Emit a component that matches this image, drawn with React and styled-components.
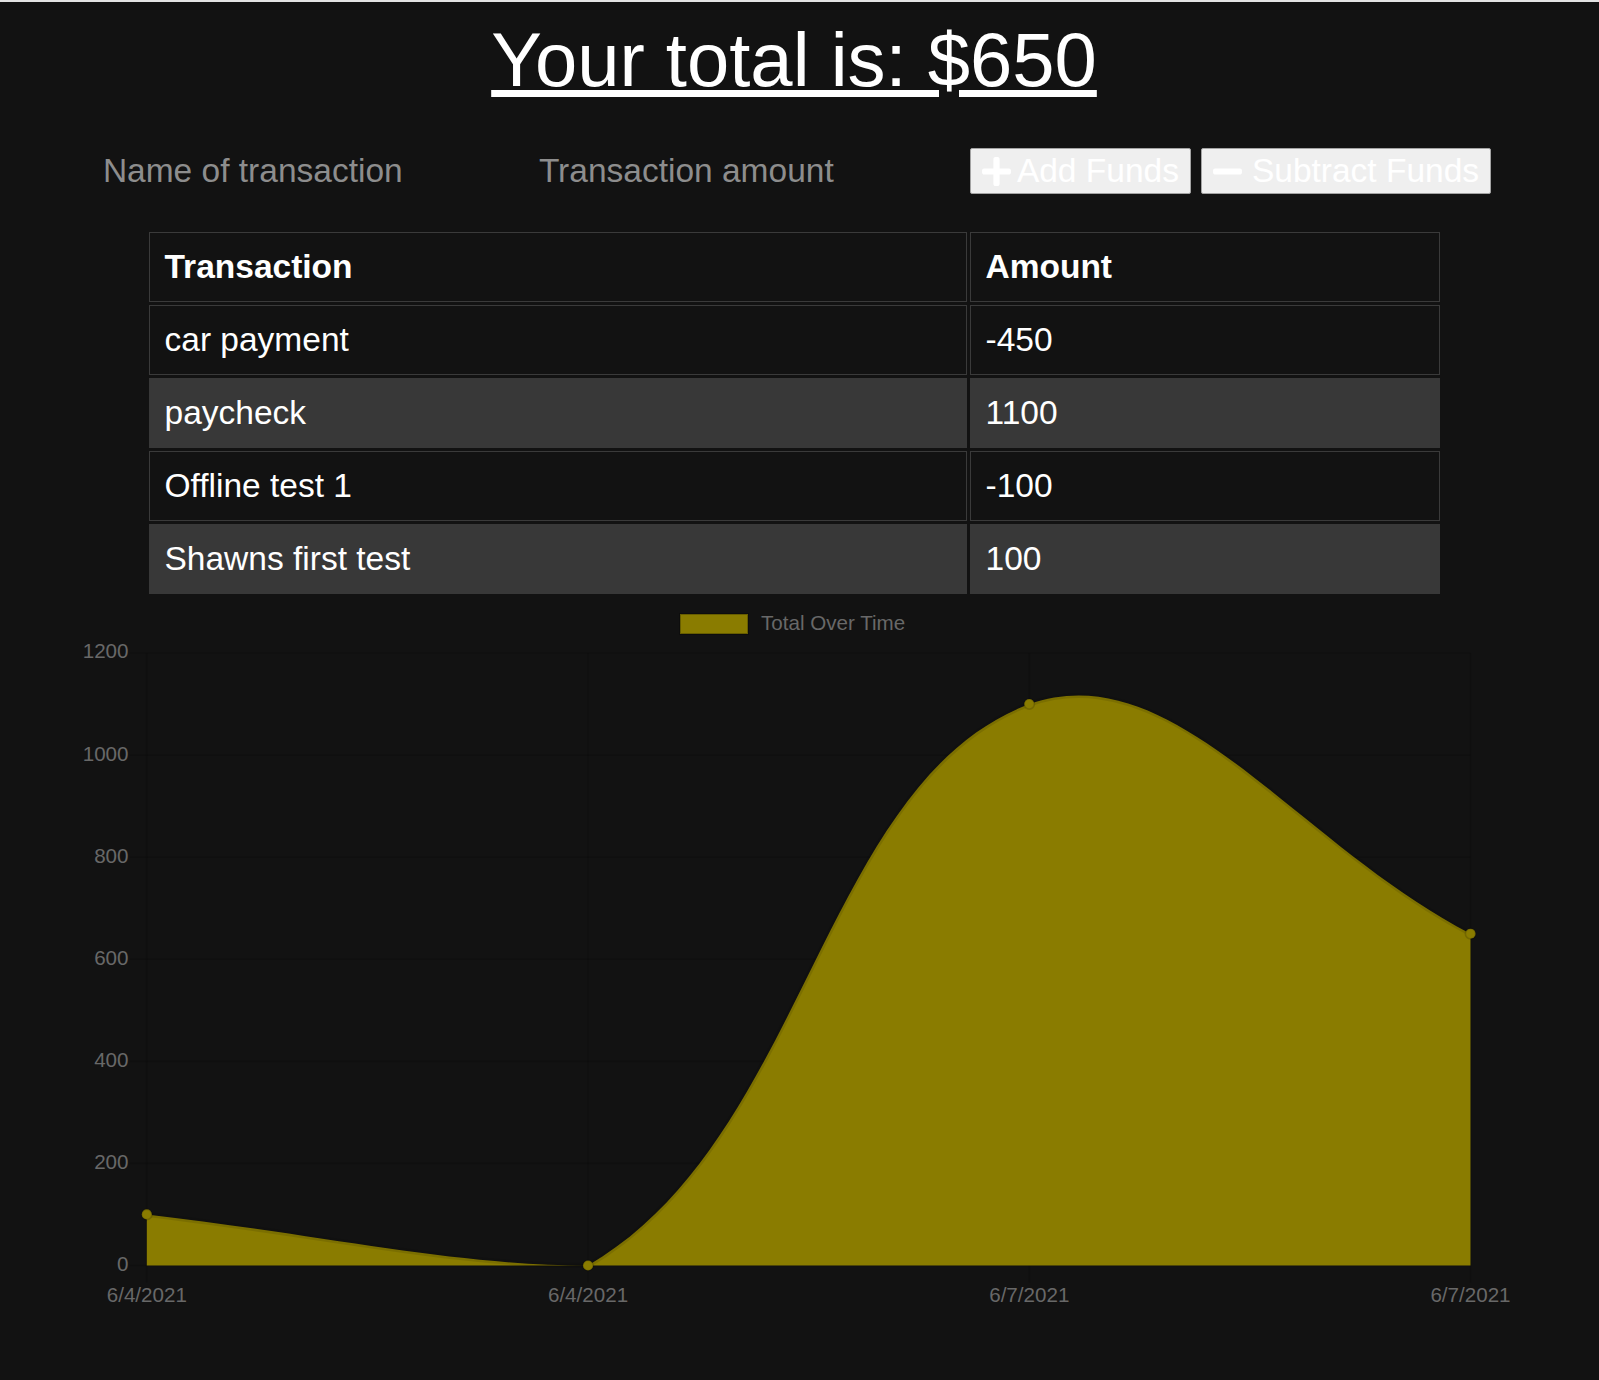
import React from "react"
import styled, { createGlobalStyle } from "styled-components"
import { FaPlus, FaMinus } from "react-icons/fa"

const GlobalStyle = createGlobalStyle`
  html, body {
    background: #121212;
  }
  body {
    margin: 0;
    border-top: 2px solid #e2e2e2;
    font-family: "Liberation Sans", Arial, sans-serif;
    color: #fff;
  }
`

const Page = styled.div`
  width: 1588px;
  display: flex;
  flex-direction: column;
  align-items: center;
`

const Title = styled.h1`
  margin: 14px 0 0;
  font-size: 76px;
  font-weight: normal;
  line-height: normal;
  text-decoration: underline;
  color: #fff;
`

const Form = styled.form`
  margin-top: 45px;
  display: flex;
  align-items: center;
  height: 46px;
`

const Field = styled.input`
  width: 436px;
  box-sizing: border-box;
  padding: 0 6px;
  background: transparent;
  border: none;
  outline: none;
  font-family: inherit;
  font-size: 33.5px;
  color: #fff;

  &::placeholder {
    color: #8d8d8d;
  }
`

const FundButton = styled.button`
  display: flex;
  align-items: center;
  gap: ${({ $gap }) => $gap}px;
  height: 46px;
  margin-left: ${({ $first }) => ($first ? "1px" : "10px")};
  padding: 0 11px;
  background: #efefef;
  border: 1px solid #a3a3a3;
  border-radius: 2px;
  font-family: inherit;
  font-size: 33.5px;
  color: #fff;
  cursor: pointer;

  svg {
    width: 29px;
    height: 33px;
  }
`

const Table = styled.table`
  margin-top: 35px;
  border-collapse: separate;
  border-spacing: 3px;
  font-size: 33.5px;
`

const Row = styled.tr`
  th, td {
    background: ${({ $shade }) => ($shade ? "#383838" : "transparent")};
    border: 1px solid ${({ $shade }) => ($shade ? "#383838" : "#3a3a3a")};
  }
`

const HeadCell = styled.th`
  width: ${({ $w }) => $w}px;
  padding: 15px;
  text-align: left;
  font-weight: bold;
  line-height: normal;
`

const Cell = styled.td`
  padding: 15px;
  text-align: left;
  line-height: normal;
`

const ChartSvg = styled.svg`
  display: block;
  align-self: flex-start;
`

const transactions = [
  { name: "car payment", value: -450 },
  { name: "paycheck", value: 1100 },
  { name: "Offline test 1", value: -100 },
  { name: "Shawns first test", value: 100 },
]

const totals = [
  { label: "6/4/2021", value: 100 },
  { label: "6/4/2021", value: 0 },
  { label: "6/7/2021", value: 1100 },
  { label: "6/7/2021", value: 650 },
]

// chart area, in page pixels
const TOP = 597
const HEIGHT = 740
const X0 = 146.8
const DX = 441.23
const Y0 = 1265.5
const YTOP = 653
const K = (Y0 - YTOP) / 1200
const FILL = "#8a7c00"
const TICK_COLOR = "#686868"

const capX = (x, area) => Math.min(Math.max(x, area.left), area.right)
const capY = (y, area) => Math.min(Math.max(y, area.top), area.bottom)

// same spline as chart.js v2 (tension 0.4, control points capped)
const buildCurve = (pts, area) => {
  const t = 0.4
  const ctrl = pts.map((cur, i) => {
    const prev = pts[i - 1] || cur
    const next = pts[i + 1] || cur
    const d01 = Math.hypot(cur.x - prev.x, cur.y - prev.y)
    const d12 = Math.hypot(next.x - cur.x, next.y - cur.y)
    const sum = d01 + d12
    const fa = sum ? (t * d01) / sum : 0
    const fb = sum ? (t * d12) / sum : 0
    return {
      prev: {
        x: capX(cur.x - fa * (next.x - prev.x), area),
        y: capY(cur.y - fa * (next.y - prev.y), area),
      },
      next: {
        x: capX(cur.x + fb * (next.x - prev.x), area),
        y: capY(cur.y + fb * (next.y - prev.y), area),
      },
    }
  })
  let d = `M${pts[0].x},${pts[0].y}`
  for (let i = 1; i < pts.length; i++) {
    const a = ctrl[i - 1].next
    const b = ctrl[i].prev
    d += ` C${a.x},${a.y} ${b.x},${b.y} ${pts[i].x},${pts[i].y}`
  }
  return d
}

const TotalChart = () => {
  const pts = totals.map((p, i) => ({ x: X0 + i * DX, y: Y0 - p.value * K }))
  const area = { left: X0, right: X0 + 3 * DX, top: YTOP, bottom: Y0 }
  const curve = buildCurve(pts, area)
  const fillPath = `${curve} L${area.right},${Y0} L${X0},${Y0} Z`
  const ticks = [0, 200, 400, 600, 800, 1000, 1200]

  return (
    <ChartSvg
      width="1588"
      height={HEIGHT}
      viewBox={`0 ${TOP} 1588 ${HEIGHT}`}
      fontFamily='"Liberation Sans", Arial, sans-serif'
    >
      <rect x="680" y="614" width="68" height="20" fill={FILL} stroke="rgba(0,0,0,0.25)" strokeWidth="2" />
      <text x="761" y="630" fontSize="20.6" fill={TICK_COLOR}>
        Total Over Time
      </text>

      {ticks.map((v) => (
        <g key={v}>
          <line x1={X0 - 17} x2={area.right} y1={Y0 - v * K} y2={Y0 - v * K} stroke="rgba(0,0,0,0.12)" strokeWidth="1.7" />
          <text x="128.5" y={Y0 - v * K} fontSize="20.6" fill={TICK_COLOR} textAnchor="end" dominantBaseline="middle">
            {v}
          </text>
        </g>
      ))}
      {pts.map((p, i) => (
        <line key={i} x1={p.x} x2={p.x} y1={YTOP} y2={Y0 + 17} stroke="rgba(0,0,0,0.12)" strokeWidth="1.7" />
      ))}

      <path d={fillPath} fill={FILL} />
      <path d={curve} fill="none" stroke="rgba(0,0,0,0.1)" strokeWidth="5" />

      {pts.map((p, i) => (
        <circle key={i} cx={p.x} cy={p.y} r="5.1" fill={FILL} stroke="rgba(0,0,0,0.15)" strokeWidth="1.7" />
      ))}

      {totals.map((p, i) => (
        <text key={i} x={pts[i].x} y="1301.5" fontSize="20.6" fill={TICK_COLOR} textAnchor="middle">
          {p.label}
        </text>
      ))}
    </ChartSvg>
  )
}

const App = () => {
  return (
    <Page>
      <GlobalStyle />
      <Title>Your total is: $650</Title>

      <Form onSubmit={(e) => e.preventDefault()}>
        <Field type="text" placeholder="Name of transaction" />
        <Field type="number" placeholder="Transaction amount" />
        <FundButton type="button" $first $gap={6}>
          <FaPlus />
          Add Funds
        </FundButton>
        <FundButton type="button" $gap={10}>
          <FaMinus />
          Subtract Funds
        </FundButton>
      </Form>

      <Table>
        <thead>
          <Row>
            <HeadCell $w={786}>Transaction</HeadCell>
            <HeadCell $w={438}>Amount</HeadCell>
          </Row>
        </thead>
        <tbody>
          {transactions.map((t, i) => (
            <Row key={t.name} $shade={i % 2 === 1}>
              <Cell>{t.name}</Cell>
              <Cell>{t.value}</Cell>
            </Row>
          ))}
        </tbody>
      </Table>

      <TotalChart />
    </Page>
  )
}

export default App
